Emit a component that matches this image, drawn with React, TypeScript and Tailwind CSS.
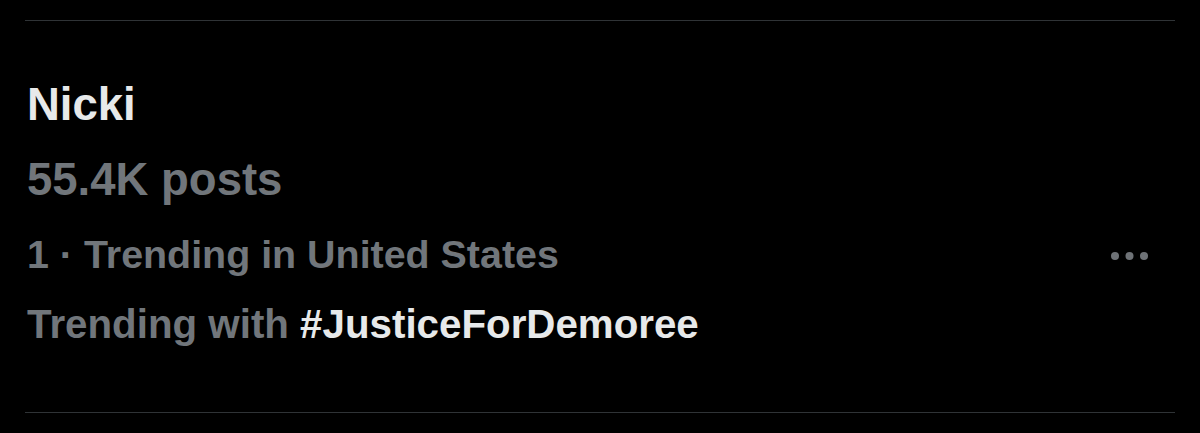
export default function App() {
  return (
    <div className="w-[1200px] h-[433px] bg-black overflow-hidden" style={{ fontFamily: '"Liberation Sans", Arial, sans-serif' }}>
      <div className="pt-[20px] px-[25px]">
        <div className="border-t border-b border-[#2f3336] pt-[46px] pb-[52px] pl-[2px]">
          <div className="text-[45.5px] leading-[75px] font-bold text-[#e7e9ea]">Nicki</div>
          <div className="text-[45.5px] leading-[76px] font-bold text-[#71767b]">55.4K posts</div>
          <div className="flex items-center justify-between pr-[26px]">
            <div className="text-[39.4px] leading-[72px] font-bold text-[#71767b]">1 · Trending in United States</div>
            <svg width="38" height="10" viewBox="0 0 38 10" className="mt-[3px]">
              <circle cx="4" cy="5" r="4" fill="#6e7276" />
              <circle cx="18.5" cy="5" r="4" fill="#6e7276" />
              <circle cx="33" cy="5" r="4" fill="#6e7276" />
            </svg>
          </div>
          <div className="text-[40.3px] leading-[70px] font-bold text-[#71767b]">
            Trending with <span className="text-[#e7e9ea]">#JusticeForDemoree</span>
          </div>
        </div>
      </div>
    </div>
  );
}
